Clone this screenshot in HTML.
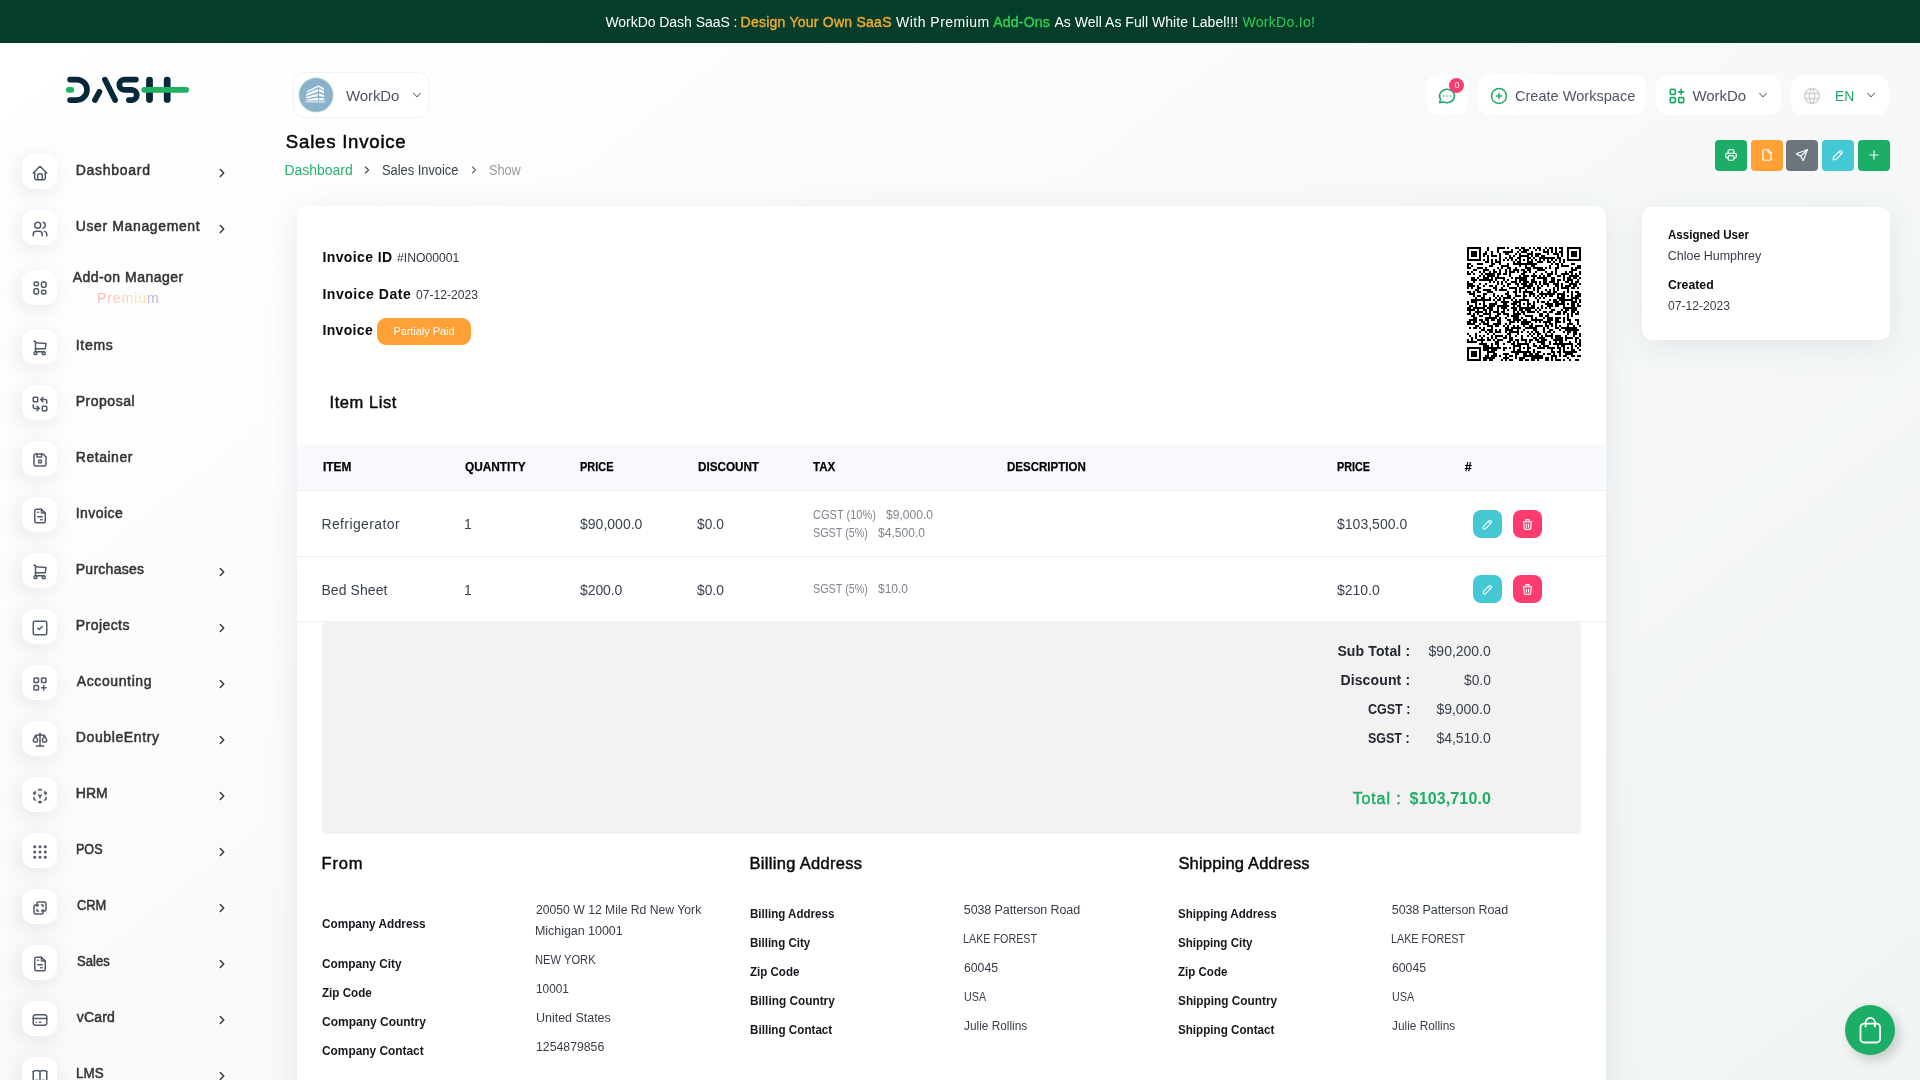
<!DOCTYPE html>
<html lang="en"><head><meta charset="utf-8"><title>Sales Invoice</title>
<style>
html,body{margin:0;padding:0;}
body{width:1920px;height:1080px;overflow:hidden;position:relative;font-family:'Liberation Sans', sans-serif;
background:linear-gradient(141.55deg,rgba(240,244,243,0) 3.46%,#f0f4f3 99.86%),#fff;}
#root{position:absolute;left:0;top:0;width:1920px;height:1080px;overflow:hidden;will-change:transform;}
.a{position:absolute;display:block;}
.t{position:absolute;white-space:pre;font-family:'Liberation Sans', sans-serif;}
</style></head><body><div id="root">
<div class="a" style="left:0px;top:0px;width:1920px;height:43px;background:#043e2a;"></div>
<svg class="a" style="left:60px;top:70px" width="140" height="40" viewBox="60 70 140 40" fill="none" stroke-linecap="round" stroke-linejoin="round">
<g stroke="#06293a" stroke-width="5.7">
<path d="M70.1 79.55H76.75A10.25 10.25 0 0 1 76.75 100.05H70.1"/>
<path d="M94.9 100.1L99.4 91.8"/>
<path d="M104.9 79.6L115.1 100.1"/>
<path d="M135.9 79.55H124.2A5.13 5.13 0 0 0 124.2 89.8H131.9A5.13 5.13 0 0 1 131.9 100.05H128.9"/>
</g>
<g stroke="#06293a" stroke-width="6.8"><path d="M149.5 80.1V99.4"/><path d="M167.2 80.1V99.4"/></g>
<g stroke="#22b063" stroke-width="5.8">
<path d="M68.7 89.85H71.3"/>
<path d="M144.2 89.85H186.2"/>
</g>
</svg>
<div class="a" style="left:22px;top:154.0px;width:35px;height:35px;background:#fff;border-radius:12px;box-shadow:-3px 4px 23px rgba(0,0,0,0.10);"></div>
<svg class="a" style="left:30.50px;top:163.50px" width="18" height="18" viewBox="0 0 24 24" fill="none" stroke="#525b69" stroke-width="2" stroke-linecap="round" stroke-linejoin="round"><path d="M5 12l-2 0l9 -9l9 9l-2 0"/><path d="M5 12v7a2 2 0 0 0 2 2h10a2 2 0 0 0 2 -2v-7"/><path d="M9 21v-6a2 2 0 0 1 2 -2h2a2 2 0 0 1 2 2v6"/></svg>
<svg class="a" style="left:214.80px;top:166.00px" width="14" height="14" viewBox="0 0 24 24" fill="none" stroke="#333" stroke-width="2.4" stroke-linecap="round" stroke-linejoin="round"><path d="M9 6l6 6l-6 6"/></svg>
<div class="a" style="left:22px;top:210.0px;width:35px;height:35px;background:#fff;border-radius:12px;box-shadow:-3px 4px 23px rgba(0,0,0,0.10);"></div>
<svg class="a" style="left:30.50px;top:219.50px" width="18" height="18" viewBox="0 0 24 24" fill="none" stroke="#525b69" stroke-width="2" stroke-linecap="round" stroke-linejoin="round"><path d="M9 7m-4 0a4 4 0 1 0 8 0a4 4 0 1 0 -8 0"/><path d="M3 21v-2a4 4 0 0 1 4 -4h4a4 4 0 0 1 4 4v2"/><path d="M16 3.13a4 4 0 0 1 0 7.75"/><path d="M21 21v-2a4 4 0 0 0 -3 -3.85"/></svg>
<svg class="a" style="left:214.80px;top:222.00px" width="14" height="14" viewBox="0 0 24 24" fill="none" stroke="#333" stroke-width="2.4" stroke-linecap="round" stroke-linejoin="round"><path d="M9 6l6 6l-6 6"/></svg>
<div class="a" style="left:22px;top:270.0px;width:35px;height:35px;background:#fff;border-radius:12px;box-shadow:-3px 4px 23px rgba(0,0,0,0.10);"></div>
<svg class="a" style="left:30.50px;top:278.80px" width="18" height="18" viewBox="0 0 24 24" fill="none" stroke="#525b69" stroke-width="2" stroke-linecap="round" stroke-linejoin="round"><rect x="4" y="4" width="6" height="5" rx="2"/><rect x="4" y="13" width="6" height="7" rx="2"/><rect x="14" y="4" width="6" height="7" rx="2"/><rect x="14" y="15" width="6" height="5" rx="2"/></svg>
<div class="a" style="left:22px;top:329.0px;width:35px;height:35px;background:#fff;border-radius:12px;box-shadow:-3px 4px 23px rgba(0,0,0,0.10);"></div>
<svg class="a" style="left:30.50px;top:338.50px" width="18" height="18" viewBox="0 0 24 24" fill="none" stroke="#525b69" stroke-width="2" stroke-linecap="round" stroke-linejoin="round"><circle cx="6" cy="19" r="2"/><circle cx="17" cy="19" r="2"/><path d="M17 17h-11v-14h-2"/><path d="M6 5l14 1l-1 7h-13"/></svg>
<div class="a" style="left:22px;top:385.0px;width:35px;height:35px;background:#fff;border-radius:12px;box-shadow:-3px 4px 23px rgba(0,0,0,0.10);"></div>
<svg class="a" style="left:30.50px;top:394.50px" width="18" height="18" viewBox="0 0 24 24" fill="none" stroke="#525b69" stroke-width="2" stroke-linecap="round" stroke-linejoin="round"><rect x="3" y="3" width="6" height="6" rx="1"/><rect x="15" y="15" width="6" height="6" rx="1"/><path d="M21 11v-3a2 2 0 0 0 -2 -2h-6l3 3m0 -6l-3 3"/><path d="M3 13v3a2 2 0 0 0 2 2h6l-3 -3m0 6l3 -3"/></svg>
<div class="a" style="left:22px;top:441.0px;width:35px;height:35px;background:#fff;border-radius:12px;box-shadow:-3px 4px 23px rgba(0,0,0,0.10);"></div>
<svg class="a" style="left:30.50px;top:450.50px" width="18" height="18" viewBox="0 0 24 24" fill="none" stroke="#525b69" stroke-width="2" stroke-linecap="round" stroke-linejoin="round"><path d="M6 4h10l4 4v10a2 2 0 0 1 -2 2h-12a2 2 0 0 1 -2 -2v-12a2 2 0 0 1 2 -2"/><circle cx="12" cy="14" r="2"/><path d="M14 4l0 4l-6 0l0 -4"/></svg>
<div class="a" style="left:22px;top:497.0px;width:35px;height:35px;background:#fff;border-radius:12px;box-shadow:-3px 4px 23px rgba(0,0,0,0.10);"></div>
<svg class="a" style="left:30.50px;top:506.50px" width="18" height="18" viewBox="0 0 24 24" fill="none" stroke="#525b69" stroke-width="2" stroke-linecap="round" stroke-linejoin="round"><path d="M14 3v4a1 1 0 0 0 1 1h4"/><path d="M17 21h-10a2 2 0 0 1 -2 -2v-14a2 2 0 0 1 2 -2h7l5 5v11a2 2 0 0 1 -2 2z"/><path d="M9 7l1 0"/><path d="M9 13l6 0"/><path d="M13 17l2 0"/></svg>
<div class="a" style="left:22px;top:553.0px;width:35px;height:35px;background:#fff;border-radius:12px;box-shadow:-3px 4px 23px rgba(0,0,0,0.10);"></div>
<svg class="a" style="left:30.50px;top:562.50px" width="18" height="18" viewBox="0 0 24 24" fill="none" stroke="#525b69" stroke-width="2" stroke-linecap="round" stroke-linejoin="round"><circle cx="6" cy="19" r="2"/><circle cx="17" cy="19" r="2"/><path d="M17 17h-11v-14h-2"/><path d="M6 5l14 1l-1 7h-13"/></svg>
<svg class="a" style="left:214.80px;top:565.00px" width="14" height="14" viewBox="0 0 24 24" fill="none" stroke="#333" stroke-width="2.4" stroke-linecap="round" stroke-linejoin="round"><path d="M9 6l6 6l-6 6"/></svg>
<div class="a" style="left:22px;top:609.0px;width:35px;height:35px;background:#fff;border-radius:12px;box-shadow:-3px 4px 23px rgba(0,0,0,0.10);"></div>
<svg class="a" style="left:30.50px;top:618.50px" width="18" height="18" viewBox="0 0 24 24" fill="none" stroke="#525b69" stroke-width="2" stroke-linecap="round" stroke-linejoin="round"><rect x="3" y="3" width="18" height="18" rx="2"/><path d="M9 12l2 2l4 -4"/></svg>
<svg class="a" style="left:214.80px;top:621.00px" width="14" height="14" viewBox="0 0 24 24" fill="none" stroke="#333" stroke-width="2.4" stroke-linecap="round" stroke-linejoin="round"><path d="M9 6l6 6l-6 6"/></svg>
<div class="a" style="left:22px;top:665.0px;width:35px;height:35px;background:#fff;border-radius:12px;box-shadow:-3px 4px 23px rgba(0,0,0,0.10);"></div>
<svg class="a" style="left:30.50px;top:674.50px" width="18" height="18" viewBox="0 0 24 24" fill="none" stroke="#525b69" stroke-width="2" stroke-linecap="round" stroke-linejoin="round"><rect x="4" y="4" width="6" height="6" rx="1"/><rect x="14" y="4" width="6" height="6" rx="1"/><rect x="4" y="14" width="6" height="6" rx="1"/><path d="M14 17h6m-3 -3v6"/></svg>
<svg class="a" style="left:214.80px;top:677.00px" width="14" height="14" viewBox="0 0 24 24" fill="none" stroke="#333" stroke-width="2.4" stroke-linecap="round" stroke-linejoin="round"><path d="M9 6l6 6l-6 6"/></svg>
<div class="a" style="left:22px;top:721.0px;width:35px;height:35px;background:#fff;border-radius:12px;box-shadow:-3px 4px 23px rgba(0,0,0,0.10);"></div>
<svg class="a" style="left:30.50px;top:730.50px" width="18" height="18" viewBox="0 0 24 24" fill="none" stroke="#525b69" stroke-width="2" stroke-linecap="round" stroke-linejoin="round"><path d="M7 20l10 0"/><path d="M6 6l6 -1l6 1"/><path d="M12 3l0 17"/><path d="M9 12l-3 -6l-3 6a3 3 0 0 0 6 0"/><path d="M21 12l-3 -6l-3 6a3 3 0 0 0 6 0"/></svg>
<svg class="a" style="left:214.80px;top:733.00px" width="14" height="14" viewBox="0 0 24 24" fill="none" stroke="#333" stroke-width="2.4" stroke-linecap="round" stroke-linejoin="round"><path d="M9 6l6 6l-6 6"/></svg>
<div class="a" style="left:22px;top:777.0px;width:35px;height:35px;background:#fff;border-radius:12px;box-shadow:-3px 4px 23px rgba(0,0,0,0.10);"></div>
<svg class="a" style="left:30.50px;top:786.50px" width="18" height="18" viewBox="0 0 24 24" fill="none" stroke="#525b69" stroke-width="2" stroke-linecap="round" stroke-linejoin="round"><path d="M6 17.6l-2 -1.1v-2.5"/><path d="M4 10v-2.5l2 -1.1"/><path d="M10 4.1l2 -1.1l2 1.1"/><path d="M18 6.4l2 1.1v2.5"/><path d="M20 14v2.5l-2 1.12"/><path d="M14 19.9l-2 1.1l-2 -1.1"/><path d="M12 12l2 -1.1"/><path d="M18 8.6l2 -1.1"/><path d="M12 12l0 2.5"/><path d="M12 18.5l0 2.5"/><path d="M12 12l-2 -1.12"/><path d="M6 8.6l-2 -1.1"/></svg>
<svg class="a" style="left:214.80px;top:789.00px" width="14" height="14" viewBox="0 0 24 24" fill="none" stroke="#333" stroke-width="2.4" stroke-linecap="round" stroke-linejoin="round"><path d="M9 6l6 6l-6 6"/></svg>
<div class="a" style="left:22px;top:833.0px;width:35px;height:35px;background:#fff;border-radius:12px;box-shadow:-3px 4px 23px rgba(0,0,0,0.10);"></div>
<svg class="a" style="left:30.50px;top:842.50px" width="18" height="18" viewBox="0 0 24 24" fill="none" stroke="#525b69" stroke-width="2" stroke-linecap="round" stroke-linejoin="round"><circle cx="5" cy="5" r="1"/><circle cx="12" cy="5" r="1"/><circle cx="19" cy="5" r="1"/><circle cx="5" cy="12" r="1"/><circle cx="12" cy="12" r="1"/><circle cx="19" cy="12" r="1"/><circle cx="5" cy="19" r="1"/><circle cx="12" cy="19" r="1"/><circle cx="19" cy="19" r="1"/></svg>
<svg class="a" style="left:214.80px;top:845.00px" width="14" height="14" viewBox="0 0 24 24" fill="none" stroke="#333" stroke-width="2.4" stroke-linecap="round" stroke-linejoin="round"><path d="M9 6l6 6l-6 6"/></svg>
<div class="a" style="left:22px;top:889.0px;width:35px;height:35px;background:#fff;border-radius:12px;box-shadow:-3px 4px 23px rgba(0,0,0,0.10);"></div>
<svg class="a" style="left:30.50px;top:898.50px" width="18" height="18" viewBox="0 0 24 24" fill="none" stroke="#525b69" stroke-width="2" stroke-linecap="round" stroke-linejoin="round"><path d="M16 16v2a2 2 0 0 1 -2 2h-8a2 2 0 0 1 -2 -2v-8a2 2 0 0 1 2 -2h2v-2a2 2 0 0 1 2 -2h8a2 2 0 0 1 2 2v8a2 2 0 0 1 -2 2h-2"/><path d="M10 8l-2 0l0 2"/><path d="M8 14l0 2l2 0"/><path d="M14 8l2 0l0 2"/><path d="M16 14l0 2l-2 0"/></svg>
<svg class="a" style="left:214.80px;top:901.00px" width="14" height="14" viewBox="0 0 24 24" fill="none" stroke="#333" stroke-width="2.4" stroke-linecap="round" stroke-linejoin="round"><path d="M9 6l6 6l-6 6"/></svg>
<div class="a" style="left:22px;top:945.0px;width:35px;height:35px;background:#fff;border-radius:12px;box-shadow:-3px 4px 23px rgba(0,0,0,0.10);"></div>
<svg class="a" style="left:30.50px;top:954.50px" width="18" height="18" viewBox="0 0 24 24" fill="none" stroke="#525b69" stroke-width="2" stroke-linecap="round" stroke-linejoin="round"><path d="M14 3v4a1 1 0 0 0 1 1h4"/><path d="M17 21h-10a2 2 0 0 1 -2 -2v-14a2 2 0 0 1 2 -2h7l5 5v11a2 2 0 0 1 -2 2z"/><path d="M9 7l1 0"/><path d="M9 13l6 0"/><path d="M13 17l2 0"/></svg>
<svg class="a" style="left:214.80px;top:957.00px" width="14" height="14" viewBox="0 0 24 24" fill="none" stroke="#333" stroke-width="2.4" stroke-linecap="round" stroke-linejoin="round"><path d="M9 6l6 6l-6 6"/></svg>
<div class="a" style="left:22px;top:1001.0px;width:35px;height:35px;background:#fff;border-radius:12px;box-shadow:-3px 4px 23px rgba(0,0,0,0.10);"></div>
<svg class="a" style="left:30.50px;top:1010.50px" width="18" height="18" viewBox="0 0 24 24" fill="none" stroke="#525b69" stroke-width="2" stroke-linecap="round" stroke-linejoin="round"><rect x="3" y="5" width="18" height="14" rx="3"/><path d="M3 10l18 0"/><path d="M7 15l.01 0"/><path d="M11 15l2 0"/></svg>
<svg class="a" style="left:214.80px;top:1013.00px" width="14" height="14" viewBox="0 0 24 24" fill="none" stroke="#333" stroke-width="2.4" stroke-linecap="round" stroke-linejoin="round"><path d="M9 6l6 6l-6 6"/></svg>
<div class="a" style="left:22px;top:1057.0px;width:35px;height:35px;background:#fff;border-radius:12px;box-shadow:-3px 4px 23px rgba(0,0,0,0.10);"></div>
<svg class="a" style="left:30.50px;top:1066.50px" width="18" height="18" viewBox="0 0 24 24" fill="none" stroke="#525b69" stroke-width="2" stroke-linecap="round" stroke-linejoin="round"><path d="M3 19a9 9 0 0 1 9 0a9 9 0 0 1 9 0"/><path d="M3 6a9 9 0 0 1 9 0a9 9 0 0 1 9 0"/><path d="M3 6l0 13"/><path d="M12 6l0 13"/><path d="M21 6l0 13"/></svg>
<svg class="a" style="left:214.80px;top:1069.00px" width="14" height="14" viewBox="0 0 24 24" fill="none" stroke="#333" stroke-width="2.4" stroke-linecap="round" stroke-linejoin="round"><path d="M9 6l6 6l-6 6"/></svg>
<div class="a" style="left:293px;top:72.2px;width:135.5px;height:45.5px;background:rgba(255,255,255,.7);border:1px solid #f0f1f1;border-radius:11px;box-sizing:border-box;"></div>
<svg class="a" style="left:292px;top:72px" width="48" height="46" viewBox="0 0 48 46">
<circle cx="24.05" cy="23" r="17.7" fill="#c9ecd9"/><circle cx="24.05" cy="23" r="16.8" fill="#8cb1cb"/>
<g fill="#fff">
<path d="M14.7 19.2L26.4 13.2L26.4 15L15.2 20.3Z"/><path d="M26.4 13.2L32 16.3L32 18L26.4 15Z"/>
<path d="M14.1 22.1L26 16.8L26 19.8L14.1 23.9Z"/><path d="M14.1 25.1L25.7 21.8L25.7 24.3L14.1 26.5Z"/><path d="M14.9 27.5L26 25.8L26 28.2L14.3 28.4Z"/>
<path d="M27.1 16.8L32 19.3L32 21.2L27.1 19.7Z"/><path d="M27.1 21.6L32 22.9L32 24.9L27.1 23.9Z"/><path d="M27.1 25.9L32 26.3L32 28.2L27.1 28.2Z"/>
<rect x="13" y="28.5" width="20.2" height="2.4" opacity=".4"/></g>
</svg>
<svg class="a" style="left:409.50px;top:88.30px" width="14" height="14" viewBox="0 0 24 24" fill="none" stroke="#5f6368" stroke-width="1.8" stroke-linecap="round" stroke-linejoin="round"><path d="M6 9l6 6l6 -6"/></svg>
<div class="a" style="left:1426px;top:75px;width:42px;height:40px;background:#fff;border-radius:12px;"></div>
<div class="a" style="left:1478px;top:75px;width:168px;height:40px;background:#fff;border-radius:12px;"></div>
<div class="a" style="left:1656px;top:75px;width:125px;height:40px;background:#fff;border-radius:12px;"></div>
<div class="a" style="left:1791px;top:75px;width:98px;height:40px;background:#fff;border-radius:12px;"></div>
<svg class="a" style="left:1437.20px;top:86.00px" width="20" height="20" viewBox="0 0 24 24" fill="none" stroke="#1fa968" stroke-width="1.8" stroke-linecap="round" stroke-linejoin="round"><path d="M3 20l1.3 -3.9a9 8 0 1 1 3.4 2.9l-4.7 1"/><path d="M12 12l0 .01"/><path d="M8 12l0 .01"/><path d="M16 12l0 .01"/></svg>
<div class="a" style="left:1449.2px;top:77.5px;width:15px;height:15px;background:#fc3c6e;border-radius:50%;"></div>
<svg class="a" style="left:1489.30px;top:86.00px" width="20" height="20" viewBox="0 0 24 24" fill="none" stroke="#1fa968" stroke-width="1.8" stroke-linecap="round" stroke-linejoin="round"><circle cx="12" cy="12" r="9"/><path d="M9 12l6 0"/><path d="M12 9l0 6"/></svg>
<svg class="a" style="left:1667.30px;top:86.00px" width="20" height="20" viewBox="0 0 24 24" fill="none" stroke="#1fa968" stroke-width="2" stroke-linecap="round" stroke-linejoin="round"><rect x="4" y="4" width="6" height="6" rx="1"/><rect x="4" y="14" width="6" height="6" rx="1"/><rect x="14" y="14" width="6" height="6" rx="1"/><path d="M14 7h6m-3 -3v6"/></svg>
<svg class="a" style="left:1756.00px;top:88.30px" width="14" height="14" viewBox="0 0 24 24" fill="none" stroke="#5f6368" stroke-width="1.8" stroke-linecap="round" stroke-linejoin="round"><path d="M6 9l6 6l6 -6"/></svg>
<svg class="a" style="left:1802.30px;top:86.00px" width="20" height="20" viewBox="0 0 24 24" fill="none" stroke="#cfcfd4" stroke-width="1.6" stroke-linecap="round" stroke-linejoin="round"><circle cx="12" cy="12" r="9"/><path d="M3.6 9l16.8 0"/><path d="M3.6 15l16.8 0"/><path d="M11.5 3a17 17 0 0 0 0 18"/><path d="M12.5 3a17 17 0 0 1 0 18"/></svg>
<svg class="a" style="left:1863.80px;top:88.30px" width="14" height="14" viewBox="0 0 24 24" fill="none" stroke="#5f6368" stroke-width="1.8" stroke-linecap="round" stroke-linejoin="round"><path d="M6 9l6 6l6 -6"/></svg>
<svg class="a" style="left:360.70px;top:164.20px" width="12" height="12" viewBox="0 0 24 24" fill="none" stroke="#444" stroke-width="2.2" stroke-linecap="round" stroke-linejoin="round"><path d="M9 6l6 6l-6 6"/></svg>
<svg class="a" style="left:468.20px;top:164.20px" width="12" height="12" viewBox="0 0 24 24" fill="none" stroke="#666" stroke-width="2.2" stroke-linecap="round" stroke-linejoin="round"><path d="M9 6l6 6l-6 6"/></svg>
<div class="a" style="left:1715px;top:140px;width:32px;height:31px;background:#1CAE66;border-radius:4px;"></div>
<svg class="a" style="left:1724.00px;top:148.10px" width="14" height="14" viewBox="0 0 24 24" fill="none" stroke="#fff" stroke-width="2" stroke-linecap="round" stroke-linejoin="round"><path d="M17 17h2a2 2 0 0 0 2 -2v-4a2 2 0 0 0 -2 -2h-14a2 2 0 0 0 -2 2v4a2 2 0 0 0 2 2h2"/><path d="M17 9v-4a2 2 0 0 0 -2 -2h-6a2 2 0 0 0 -2 2v4"/><rect x="7" y="13" width="10" height="8" rx="2"/></svg>
<div class="a" style="left:1751px;top:140px;width:32px;height:31px;background:#ffa136;border-radius:4px;"></div>
<svg class="a" style="left:1760.00px;top:148.10px" width="14" height="14" viewBox="0 0 24 24" fill="none" stroke="#fff" stroke-width="2" stroke-linecap="round" stroke-linejoin="round"><path d="M14 3v4a1 1 0 0 0 1 1h4"/><path d="M17 21h-10a2 2 0 0 1 -2 -2v-14a2 2 0 0 1 2 -2h7l5 5v11a2 2 0 0 1 -2 2z"/></svg>
<div class="a" style="left:1786px;top:140px;width:32px;height:31px;background:#6c757d;border-radius:4px;"></div>
<svg class="a" style="left:1795.00px;top:148.10px" width="14" height="14" viewBox="0 0 24 24" fill="none" stroke="#fff" stroke-width="2" stroke-linecap="round" stroke-linejoin="round"><path d="M10 14l11 -11"/><path d="M21 3l-6.5 18a.55 .55 0 0 1 -1 0l-3.500 -7l-7 -3.500a.55 .55 0 0 1 0 -1l18 -6.500"/></svg>
<div class="a" style="left:1822px;top:140px;width:32px;height:31px;background:#44c8d4;border-radius:4px;"></div>
<svg class="a" style="left:1831.00px;top:148.10px" width="14" height="14" viewBox="0 0 24 24" fill="none" stroke="#fff" stroke-width="2" stroke-linecap="round" stroke-linejoin="round"><path d="M4 20h4l10.5 -10.500a2.828 2.828 0 1 0 -4 -4l-10.500 10.500v4"/><path d="M13.500 6.500l4 4"/></svg>
<div class="a" style="left:1858px;top:140px;width:32px;height:31px;background:#1CAE66;border-radius:4px;"></div>
<svg class="a" style="left:1867.00px;top:148.10px" width="14" height="14" viewBox="0 0 24 24" fill="none" stroke="#fff" stroke-width="2" stroke-linecap="round" stroke-linejoin="round"><path d="M12 5l0 14"/><path d="M5 12l14 0"/></svg>
<div class="a" style="left:297px;top:206px;width:1309px;height:900px;background:#fff;border-radius:10px;box-shadow:0 6px 30px rgba(182,186,203,.3);"></div>
<div class="a" style="left:377px;top:318px;width:94px;height:27px;background:#ffa136;border-radius:9px;"></div>
<div class="a" style="left:297px;top:444px;width:1309px;height:46px;background:#f8f9fd;border-bottom:1px solid #f1f1f1;"></div>
<div class="a" style="left:297px;top:556px;width:1309px;height:1px;background:#f1f1f1;"></div>
<div class="a" style="left:297px;top:621px;width:1309px;height:1px;background:#f1f1f1;"></div>
<div class="a" style="left:1473px;top:510px;width:29px;height:28px;background:#44c8d4;border-radius:8px;"></div>
<svg class="a" style="left:1481.00px;top:517.50px" width="13" height="13" viewBox="0 0 24 24" fill="none" stroke="#fff" stroke-width="2" stroke-linecap="round" stroke-linejoin="round"><path d="M4 20h4l10.5 -10.500a2.828 2.828 0 1 0 -4 -4l-10.500 10.500v4"/><path d="M13.500 6.500l4 4"/></svg>
<div class="a" style="left:1513px;top:510px;width:29px;height:28px;background:#fc3c6e;border-radius:8px;"></div>
<svg class="a" style="left:1521.00px;top:517.50px" width="13" height="13" viewBox="0 0 24 24" fill="none" stroke="#fff" stroke-width="2" stroke-linecap="round" stroke-linejoin="round"><path d="M4 7l16 0"/><path d="M10 11l0 6"/><path d="M14 11l0 6"/><path d="M5 7l1 12a2 2 0 0 0 2 2h8a2 2 0 0 0 2 -2l1 -12"/><path d="M9 7v-3a1 1 0 0 1 1 -1h4a1 1 0 0 1 1 1v3"/></svg>
<div class="a" style="left:1473px;top:575px;width:29px;height:28px;background:#44c8d4;border-radius:8px;"></div>
<svg class="a" style="left:1481.00px;top:582.50px" width="13" height="13" viewBox="0 0 24 24" fill="none" stroke="#fff" stroke-width="2" stroke-linecap="round" stroke-linejoin="round"><path d="M4 20h4l10.5 -10.500a2.828 2.828 0 1 0 -4 -4l-10.500 10.500v4"/><path d="M13.500 6.500l4 4"/></svg>
<div class="a" style="left:1513px;top:575px;width:29px;height:28px;background:#fc3c6e;border-radius:8px;"></div>
<svg class="a" style="left:1521.00px;top:582.50px" width="13" height="13" viewBox="0 0 24 24" fill="none" stroke="#fff" stroke-width="2" stroke-linecap="round" stroke-linejoin="round"><path d="M4 7l16 0"/><path d="M10 11l0 6"/><path d="M14 11l0 6"/><path d="M5 7l1 12a2 2 0 0 0 2 2h8a2 2 0 0 0 2 -2l1 -12"/><path d="M9 7v-3a1 1 0 0 1 1 -1h4a1 1 0 0 1 1 1v3"/></svg>
<div class="a" style="left:322px;top:622px;width:1259px;height:211.5px;background:#f2f2f2;border-radius:5px;"></div>
<div class="a" style="left:1337px;top:772px;width:154px;height:1px;background:#efefef;"></div>
<div class="a" style="left:1642px;top:207px;width:248px;height:133px;background:#fff;border-radius:10px;box-shadow:0 6px 30px rgba(182,186,203,.3);"></div>
<div class="a" style="left:1845px;top:1005px;width:50px;height:50px;background:#1cae66;border-radius:50%;box-shadow:4px 5px 12px rgba(0,0,0,.18);"></div>
<svg class="a" style="left:1845px;top:1005px" width="50" height="50" viewBox="1845 1005 50 50" fill="none" stroke="#fff" stroke-width="1.8" stroke-linecap="round" stroke-linejoin="round"><rect x="1860.5" y="1023.7" width="19.6" height="18.8" rx="3.6"/><path d="M1865.6 1026.6V1022.6a4.65 4.65 0 0 1 9.3 0V1026.6"/></svg>
<svg class="a" style="left:1467px;top:247px" width="114" height="114" viewBox="0 0 114 114" shape-rendering="crispEdges"><rect width="114" height="114" fill="#fff"/><path fill="#000" d="M0 0h14v2h-14zM20 0h2v2h-2zM30 0h8v2h-8zM40 0h2v2h-2zM48 0h4v2h-4zM54 0h4v2h-4zM62 0h2v2h-2zM66 0h2v2h-2zM70 0h4v2h-4zM78 0h2v2h-2zM82 0h4v2h-4zM88 0h2v2h-2zM92 0h4v2h-4zM100 0h14v2h-14zM0 2h2v2h-2zM12 2h2v2h-2zM20 2h2v2h-2zM30 2h2v2h-2zM44 2h2v2h-2zM52 2h2v2h-2zM56 2h6v2h-6zM68 2h2v2h-2zM72 2h2v2h-2zM76 2h2v2h-2zM80 2h2v2h-2zM84 2h2v2h-2zM88 2h2v2h-2zM94 2h2v2h-2zM100 2h2v2h-2zM112 2h2v2h-2zM0 4h2v2h-2zM4 4h6v2h-6zM12 4h2v2h-2zM18 4h2v2h-2zM24 4h2v2h-2zM30 4h2v2h-2zM36 4h10v2h-10zM50 4h2v2h-2zM54 4h6v2h-6zM64 4h2v2h-2zM76 4h6v2h-6zM84 4h2v2h-2zM88 4h2v2h-2zM92 4h4v2h-4zM100 4h2v2h-2zM104 4h6v2h-6zM112 4h2v2h-2zM0 6h2v2h-2zM4 6h6v2h-6zM12 6h2v2h-2zM16 6h4v2h-4zM24 6h2v2h-2zM32 6h2v2h-2zM38 6h4v2h-4zM48 6h2v2h-2zM52 6h2v2h-2zM60 6h6v2h-6zM68 6h6v2h-6zM80 6h2v2h-2zM86 6h6v2h-6zM94 6h2v2h-2zM100 6h2v2h-2zM104 6h6v2h-6zM112 6h2v2h-2zM0 8h2v2h-2zM4 8h6v2h-6zM12 8h2v2h-2zM16 8h2v2h-2zM20 8h2v2h-2zM24 8h6v2h-6zM32 8h2v2h-2zM42 8h2v2h-2zM46 8h2v2h-2zM52 8h10v2h-10zM64 8h2v2h-2zM68 8h4v2h-4zM74 8h4v2h-4zM90 8h2v2h-2zM94 8h2v2h-2zM100 8h2v2h-2zM104 8h6v2h-6zM112 8h2v2h-2zM0 10h2v2h-2zM12 10h2v2h-2zM20 10h2v2h-2zM32 10h2v2h-2zM38 10h2v2h-2zM42 10h4v2h-4zM50 10h4v2h-4zM60 10h4v2h-4zM66 10h2v2h-2zM72 10h16v2h-16zM90 10h4v2h-4zM100 10h2v2h-2zM112 10h2v2h-2zM0 12h14v2h-14zM16 12h2v2h-2zM20 12h2v2h-2zM24 12h2v2h-2zM28 12h2v2h-2zM32 12h2v2h-2zM36 12h2v2h-2zM40 12h2v2h-2zM44 12h2v2h-2zM48 12h2v2h-2zM52 12h2v2h-2zM56 12h2v2h-2zM60 12h2v2h-2zM64 12h2v2h-2zM68 12h2v2h-2zM72 12h2v2h-2zM76 12h2v2h-2zM80 12h2v2h-2zM84 12h2v2h-2zM88 12h2v2h-2zM92 12h2v2h-2zM96 12h2v2h-2zM100 12h14v2h-14zM18 14h4v2h-4zM24 14h2v2h-2zM28 14h6v2h-6zM46 14h2v2h-2zM50 14h4v2h-4zM60 14h6v2h-6zM70 14h6v2h-6zM80 14h4v2h-4zM86 14h2v2h-2zM92 14h2v2h-2zM96 14h2v2h-2zM0 16h4v2h-4zM10 16h6v2h-6zM24 16h4v2h-4zM32 16h2v2h-2zM40 16h2v2h-2zM46 16h24v2h-24zM84 16h2v2h-2zM88 16h4v2h-4zM94 16h2v2h-2zM104 16h4v2h-4zM0 18h2v2h-2zM4 18h2v2h-2zM22 18h4v2h-4zM34 18h8v2h-8zM52 18h2v2h-2zM58 18h2v2h-2zM64 18h4v2h-4zM82 18h2v2h-2zM90 18h2v2h-2zM94 18h8v2h-8zM110 18h4v2h-4zM0 20h4v2h-4zM10 20h6v2h-6zM18 20h2v2h-2zM30 20h2v2h-2zM34 20h2v2h-2zM40 20h4v2h-4zM48 20h2v2h-2zM58 20h6v2h-6zM66 20h10v2h-10zM78 20h2v2h-2zM82 20h2v2h-2zM88 20h4v2h-4zM104 20h2v2h-2zM108 20h6v2h-6zM6 22h4v2h-4zM16 22h6v2h-6zM26 22h2v2h-2zM32 22h2v2h-2zM38 22h2v2h-2zM42 22h2v2h-2zM46 22h6v2h-6zM54 22h4v2h-4zM60 22h4v2h-4zM70 22h8v2h-8zM88 22h2v2h-2zM104 22h6v2h-6zM0 24h2v2h-2zM4 24h2v2h-2zM12 24h2v2h-2zM16 24h2v2h-2zM22 24h2v2h-2zM26 24h4v2h-4zM32 24h2v2h-2zM38 24h2v2h-2zM42 24h6v2h-6zM50 24h2v2h-2zM56 24h4v2h-4zM62 24h2v2h-2zM68 24h2v2h-2zM78 24h2v2h-2zM84 24h2v2h-2zM88 24h2v2h-2zM98 24h2v2h-2zM102 24h4v2h-4zM112 24h2v2h-2zM0 26h4v2h-4zM6 26h2v2h-2zM14 26h2v2h-2zM18 26h10v2h-10zM30 26h4v2h-4zM36 26h4v2h-4zM42 26h2v2h-2zM54 26h4v2h-4zM66 26h2v2h-2zM74 26h2v2h-2zM80 26h6v2h-6zM88 26h2v2h-2zM94 26h8v2h-8zM104 26h2v2h-2zM108 26h2v2h-2zM112 26h2v2h-2zM12 28h2v2h-2zM16 28h2v2h-2zM20 28h8v2h-8zM30 28h2v2h-2zM42 28h2v2h-2zM52 28h2v2h-2zM56 28h6v2h-6zM64 28h6v2h-6zM72 28h2v2h-2zM76 28h2v2h-2zM80 28h4v2h-4zM90 28h4v2h-4zM96 28h2v2h-2zM102 28h10v2h-10zM4 30h4v2h-4zM10 30h2v2h-2zM16 30h6v2h-6zM24 30h2v2h-2zM28 30h10v2h-10zM44 30h2v2h-2zM48 30h12v2h-12zM66 30h2v2h-2zM70 30h10v2h-10zM84 30h4v2h-4zM96 30h2v2h-2zM100 30h4v2h-4zM106 30h4v2h-4zM112 30h2v2h-2zM4 32h6v2h-6zM12 32h14v2h-14zM28 32h2v2h-2zM36 32h2v2h-2zM40 32h2v2h-2zM48 32h2v2h-2zM52 32h8v2h-8zM64 32h4v2h-4zM76 32h4v2h-4zM84 32h4v2h-4zM90 32h4v2h-4zM96 32h2v2h-2zM100 32h6v2h-6zM110 32h2v2h-2zM0 34h2v2h-2zM6 34h2v2h-2zM22 34h2v2h-2zM26 34h2v2h-2zM30 34h2v2h-2zM34 34h2v2h-2zM38 34h2v2h-2zM44 34h6v2h-6zM52 34h2v2h-2zM56 34h6v2h-6zM64 34h6v2h-6zM72 34h2v2h-2zM76 34h4v2h-4zM82 34h6v2h-6zM90 34h2v2h-2zM98 34h4v2h-4zM104 34h2v2h-2zM108 34h4v2h-4zM0 36h6v2h-6zM12 36h2v2h-2zM18 36h2v2h-2zM30 36h2v2h-2zM34 36h2v2h-2zM40 36h4v2h-4zM48 36h4v2h-4zM54 36h6v2h-6zM62 36h4v2h-4zM68 36h2v2h-2zM72 36h2v2h-2zM76 36h6v2h-6zM86 36h6v2h-6zM94 36h2v2h-2zM102 36h8v2h-8zM112 36h2v2h-2zM0 38h8v2h-8zM10 38h2v2h-2zM16 38h2v2h-2zM22 38h4v2h-4zM28 38h2v2h-2zM36 38h2v2h-2zM40 38h2v2h-2zM50 38h2v2h-2zM56 38h10v2h-10zM70 38h2v2h-2zM74 38h2v2h-2zM80 38h2v2h-2zM88 38h4v2h-4zM94 38h2v2h-2zM98 38h6v2h-6zM106 38h4v2h-4zM0 40h2v2h-2zM4 40h2v2h-2zM10 40h4v2h-4zM26 40h4v2h-4zM34 40h2v2h-2zM42 40h8v2h-8zM52 40h6v2h-6zM60 40h4v2h-4zM66 40h2v2h-2zM70 40h4v2h-4zM86 40h2v2h-2zM90 40h2v2h-2zM94 40h8v2h-8zM104 40h4v2h-4zM110 40h2v2h-2zM8 42h4v2h-4zM16 42h8v2h-8zM28 42h2v2h-2zM32 42h8v2h-8zM48 42h2v2h-2zM52 42h2v2h-2zM58 42h2v2h-2zM66 42h2v2h-2zM70 42h2v2h-2zM78 42h2v2h-2zM82 42h2v2h-2zM86 42h2v2h-2zM90 42h2v2h-2zM100 42h2v2h-2zM0 44h4v2h-4zM6 44h2v2h-2zM10 44h4v2h-4zM20 44h6v2h-6zM40 44h2v2h-2zM46 44h4v2h-4zM52 44h2v2h-2zM56 44h10v2h-10zM70 44h2v2h-2zM74 44h2v2h-2zM80 44h4v2h-4zM86 44h4v2h-4zM96 44h2v2h-2zM100 44h2v2h-2zM104 44h2v2h-2zM108 44h4v2h-4zM2 46h6v2h-6zM16 46h4v2h-4zM26 46h2v2h-2zM38 46h4v2h-4zM48 46h2v2h-2zM56 46h2v2h-2zM62 46h6v2h-6zM72 46h16v2h-16zM90 46h8v2h-8zM104 46h2v2h-2zM110 46h4v2h-4zM6 48h2v2h-2zM10 48h4v2h-4zM16 48h2v2h-2zM26 48h2v2h-2zM30 48h2v2h-2zM34 48h2v2h-2zM40 48h4v2h-4zM48 48h6v2h-6zM56 48h4v2h-4zM62 48h2v2h-2zM66 48h2v2h-2zM70 48h2v2h-2zM74 48h2v2h-2zM78 48h2v2h-2zM82 48h4v2h-4zM90 48h2v2h-2zM94 48h4v2h-4zM100 48h2v2h-2zM104 48h2v2h-2zM108 48h6v2h-6zM8 50h2v2h-2zM14 50h4v2h-4zM22 50h2v2h-2zM28 50h2v2h-2zM32 50h2v2h-2zM36 50h8v2h-8zM46 50h2v2h-2zM56 50h2v2h-2zM68 50h2v2h-2zM72 50h2v2h-2zM76 50h2v2h-2zM90 50h8v2h-8zM104 50h8v2h-8zM4 52h20v2h-20zM26 52h2v2h-2zM30 52h4v2h-4zM36 52h2v2h-2zM44 52h2v2h-2zM48 52h2v2h-2zM52 52h10v2h-10zM70 52h2v2h-2zM82 52h2v2h-2zM86 52h4v2h-4zM92 52h14v2h-14zM108 52h2v2h-2zM112 52h2v2h-2zM0 54h2v2h-2zM4 54h6v2h-6zM16 54h2v2h-2zM28 54h2v2h-2zM34 54h8v2h-8zM46 54h8v2h-8zM60 54h2v2h-2zM66 54h2v2h-2zM70 54h2v2h-2zM74 54h4v2h-4zM80 54h2v2h-2zM86 54h6v2h-6zM94 54h4v2h-4zM104 54h6v2h-6zM112 54h2v2h-2zM0 56h2v2h-2zM8 56h2v2h-2zM12 56h2v2h-2zM16 56h2v2h-2zM22 56h8v2h-8zM36 56h4v2h-4zM44 56h6v2h-6zM52 56h2v2h-2zM56 56h2v2h-2zM60 56h4v2h-4zM66 56h2v2h-2zM78 56h8v2h-8zM88 56h10v2h-10zM100 56h2v2h-2zM104 56h4v2h-4zM110 56h2v2h-2zM2 58h4v2h-4zM8 58h2v2h-2zM16 58h4v2h-4zM22 58h6v2h-6zM30 58h12v2h-12zM46 58h2v2h-2zM50 58h4v2h-4zM60 58h2v2h-2zM64 58h4v2h-4zM74 58h2v2h-2zM80 58h6v2h-6zM88 58h4v2h-4zM96 58h2v2h-2zM104 58h4v2h-4zM110 58h4v2h-4zM0 60h4v2h-4zM6 60h12v2h-12zM20 60h6v2h-6zM30 60h2v2h-2zM34 60h6v2h-6zM44 60h6v2h-6zM52 60h16v2h-16zM70 60h2v2h-2zM74 60h2v2h-2zM78 60h2v2h-2zM82 60h2v2h-2zM96 60h14v2h-14zM0 62h8v2h-8zM10 62h2v2h-2zM16 62h4v2h-4zM22 62h4v2h-4zM30 62h2v2h-2zM36 62h2v2h-2zM40 62h2v2h-2zM46 62h4v2h-4zM52 62h4v2h-4zM58 62h6v2h-6zM68 62h2v2h-2zM72 62h2v2h-2zM84 62h4v2h-4zM94 62h2v2h-2zM98 62h4v2h-4zM104 62h6v2h-6zM2 64h2v2h-2zM8 64h8v2h-8zM18 64h2v2h-2zM22 64h2v2h-2zM26 64h6v2h-6zM34 64h4v2h-4zM46 64h2v2h-2zM50 64h2v2h-2zM54 64h4v2h-4zM60 64h8v2h-8zM70 64h2v2h-2zM76 64h4v2h-4zM82 64h4v2h-4zM90 64h4v2h-4zM96 64h4v2h-4zM104 64h4v2h-4zM110 64h2v2h-2zM0 66h4v2h-4zM6 66h2v2h-2zM10 66h2v2h-2zM16 66h8v2h-8zM30 66h4v2h-4zM36 66h6v2h-6zM46 66h8v2h-8zM56 66h2v2h-2zM72 66h4v2h-4zM80 66h2v2h-2zM88 66h6v2h-6zM96 66h2v2h-2zM100 66h2v2h-2zM104 66h2v2h-2zM108 66h4v2h-4zM4 68h4v2h-4zM12 68h4v2h-4zM22 68h2v2h-2zM28 68h4v2h-4zM40 68h2v2h-2zM44 68h8v2h-8zM58 68h8v2h-8zM72 68h4v2h-4zM78 68h4v2h-4zM100 68h2v2h-2zM104 68h2v2h-2zM6 70h4v2h-4zM18 70h12v2h-12zM32 70h2v2h-2zM38 70h2v2h-2zM46 70h6v2h-6zM54 70h2v2h-2zM64 70h2v2h-2zM68 70h2v2h-2zM76 70h2v2h-2zM80 70h6v2h-6zM88 70h6v2h-6zM96 70h2v2h-2zM100 70h2v2h-2zM2 72h8v2h-8zM12 72h4v2h-4zM18 72h4v2h-4zM24 72h4v2h-4zM30 72h4v2h-4zM40 72h4v2h-4zM46 72h8v2h-8zM56 72h4v2h-4zM64 72h12v2h-12zM80 72h6v2h-6zM88 72h4v2h-4zM96 72h2v2h-2zM100 72h4v2h-4zM108 72h4v2h-4zM0 74h4v2h-4zM6 74h4v2h-4zM14 74h4v2h-4zM20 74h2v2h-2zM30 74h4v2h-4zM42 74h6v2h-6zM50 74h2v2h-2zM54 74h10v2h-10zM68 74h2v2h-2zM72 74h2v2h-2zM76 74h8v2h-8zM88 74h6v2h-6zM96 74h2v2h-2zM102 74h2v2h-2zM110 74h2v2h-2zM0 76h8v2h-8zM12 76h2v2h-2zM16 76h6v2h-6zM26 76h8v2h-8zM38 76h2v2h-2zM42 76h2v2h-2zM54 76h8v2h-8zM64 76h2v2h-2zM78 76h2v2h-2zM82 76h4v2h-4zM88 76h2v2h-2zM100 76h6v2h-6zM110 76h2v2h-2zM8 78h4v2h-4zM20 78h6v2h-6zM28 78h4v2h-4zM36 78h2v2h-2zM40 78h2v2h-2zM46 78h2v2h-2zM50 78h2v2h-2zM56 78h2v2h-2zM62 78h4v2h-4zM68 78h8v2h-8zM78 78h4v2h-4zM84 78h2v2h-2zM88 78h2v2h-2zM92 78h2v2h-2zM100 78h2v2h-2zM106 78h2v2h-2zM112 78h2v2h-2zM2 80h2v2h-2zM6 80h4v2h-4zM12 80h2v2h-2zM16 80h2v2h-2zM24 80h2v2h-2zM38 80h4v2h-4zM44 80h10v2h-10zM58 80h12v2h-12zM76 80h2v2h-2zM80 80h2v2h-2zM88 80h4v2h-4zM94 80h16v2h-16zM14 82h4v2h-4zM20 82h6v2h-6zM28 82h2v2h-2zM32 82h2v2h-2zM38 82h8v2h-8zM50 82h2v2h-2zM56 82h2v2h-2zM66 82h4v2h-4zM76 82h2v2h-2zM82 82h4v2h-4zM92 82h2v2h-2zM98 82h14v2h-14zM12 84h2v2h-2zM18 84h2v2h-2zM22 84h4v2h-4zM28 84h6v2h-6zM38 84h2v2h-2zM42 84h10v2h-10zM54 84h2v2h-2zM60 84h2v2h-2zM64 84h2v2h-2zM68 84h4v2h-4zM76 84h2v2h-2zM80 84h4v2h-4zM86 84h2v2h-2zM96 84h2v2h-2zM100 84h4v2h-4zM106 84h4v2h-4zM0 86h2v2h-2zM8 86h2v2h-2zM20 86h2v2h-2zM26 86h2v2h-2zM40 86h4v2h-4zM50 86h2v2h-2zM62 86h2v2h-2zM66 86h2v2h-2zM70 86h4v2h-4zM78 86h2v2h-2zM84 86h2v2h-2zM100 86h2v2h-2zM106 86h4v2h-4zM112 86h2v2h-2zM2 88h2v2h-2zM8 88h2v2h-2zM12 88h2v2h-2zM16 88h2v2h-2zM24 88h2v2h-2zM28 88h8v2h-8zM38 88h2v2h-2zM42 88h2v2h-2zM48 88h2v2h-2zM54 88h2v2h-2zM60 88h2v2h-2zM64 88h2v2h-2zM70 88h2v2h-2zM74 88h2v2h-2zM78 88h8v2h-8zM88 88h6v2h-6zM98 88h2v2h-2zM106 88h2v2h-2zM112 88h2v2h-2zM4 90h2v2h-2zM8 90h2v2h-2zM14 90h2v2h-2zM20 90h2v2h-2zM24 90h2v2h-2zM28 90h2v2h-2zM36 90h4v2h-4zM42 90h4v2h-4zM54 90h2v2h-2zM66 90h4v2h-4zM72 90h6v2h-6zM84 90h2v2h-2zM88 90h8v2h-8zM98 90h8v2h-8zM108 90h4v2h-4zM0 92h2v2h-2zM4 92h2v2h-2zM10 92h8v2h-8zM20 92h4v2h-4zM26 92h2v2h-2zM30 92h6v2h-6zM42 92h4v2h-4zM48 92h4v2h-4zM54 92h6v2h-6zM62 92h4v2h-4zM68 92h4v2h-4zM74 92h6v2h-6zM86 92h10v2h-10zM98 92h2v2h-2zM108 92h2v2h-2zM112 92h2v2h-2zM0 94h10v2h-10zM14 94h2v2h-2zM28 94h4v2h-4zM40 94h4v2h-4zM46 94h2v2h-2zM50 94h2v2h-2zM58 94h2v2h-2zM62 94h2v2h-2zM70 94h8v2h-8zM82 94h2v2h-2zM88 94h2v2h-2zM92 94h4v2h-4zM102 94h2v2h-2zM108 94h2v2h-2zM112 94h2v2h-2zM12 96h8v2h-8zM24 96h2v2h-2zM28 96h4v2h-4zM36 96h2v2h-2zM44 96h4v2h-4zM50 96h12v2h-12zM66 96h2v2h-2zM74 96h4v2h-4zM82 96h2v2h-2zM86 96h20v2h-20zM110 96h4v2h-4zM16 98h6v2h-6zM24 98h2v2h-2zM30 98h2v2h-2zM46 98h8v2h-8zM60 98h2v2h-2zM66 98h4v2h-4zM72 98h2v2h-2zM76 98h6v2h-6zM90 98h2v2h-2zM94 98h4v2h-4zM104 98h2v2h-2zM108 98h2v2h-2zM112 98h2v2h-2zM0 100h14v2h-14zM16 100h18v2h-18zM36 100h4v2h-4zM42 100h2v2h-2zM46 100h2v2h-2zM52 100h2v2h-2zM56 100h2v2h-2zM60 100h4v2h-4zM70 100h8v2h-8zM80 100h8v2h-8zM90 100h4v2h-4zM96 100h2v2h-2zM100 100h2v2h-2zM104 100h2v2h-2zM110 100h2v2h-2zM0 102h2v2h-2zM12 102h2v2h-2zM16 102h6v2h-6zM24 102h6v2h-6zM36 102h2v2h-2zM46 102h2v2h-2zM50 102h4v2h-4zM60 102h2v2h-2zM66 102h2v2h-2zM84 102h2v2h-2zM92 102h2v2h-2zM96 102h2v2h-2zM104 102h4v2h-4zM112 102h2v2h-2zM0 104h2v2h-2zM4 104h6v2h-6zM12 104h2v2h-2zM20 104h8v2h-8zM44 104h20v2h-20zM66 104h2v2h-2zM70 104h4v2h-4zM84 104h4v2h-4zM90 104h4v2h-4zM96 104h14v2h-14zM0 106h2v2h-2zM4 106h6v2h-6zM12 106h2v2h-2zM20 106h2v2h-2zM26 106h4v2h-4zM36 106h6v2h-6zM48 106h4v2h-4zM56 106h4v2h-4zM62 106h4v2h-4zM68 106h4v2h-4zM76 106h2v2h-2zM80 106h4v2h-4zM86 106h2v2h-2zM92 106h2v2h-2zM98 106h8v2h-8zM0 108h2v2h-2zM4 108h6v2h-6zM12 108h2v2h-2zM18 108h4v2h-4zM24 108h6v2h-6zM32 108h2v2h-2zM38 108h2v2h-2zM42 108h4v2h-4zM48 108h2v2h-2zM56 108h20v2h-20zM84 108h6v2h-6zM92 108h2v2h-2zM96 108h4v2h-4zM104 108h4v2h-4zM110 108h4v2h-4zM0 110h2v2h-2zM12 110h2v2h-2zM16 110h12v2h-12zM36 110h6v2h-6zM48 110h2v2h-2zM52 110h6v2h-6zM64 110h12v2h-12zM78 110h4v2h-4zM84 110h2v2h-2zM88 110h2v2h-2zM100 110h2v2h-2zM0 112h14v2h-14zM16 112h4v2h-4zM22 112h4v2h-4zM34 112h2v2h-2zM38 112h2v2h-2zM42 112h4v2h-4zM52 112h4v2h-4zM58 112h4v2h-4zM64 112h4v2h-4zM70 112h2v2h-2zM78 112h4v2h-4zM84 112h2v2h-2zM88 112h6v2h-6zM96 112h2v2h-2zM102 112h2v2h-2zM108 112h4v2h-4z"/></svg>
<div class="t" style="left:605.40px;top:12.00px;font-size:14px;line-height:20px;color:#fff;letter-spacing:-0.041px;">WorkDo Dash SaaS :</div>
<div class="t" style="left:740.60px;top:12.00px;font-size:14px;line-height:20px;color:#f2aa2e;letter-spacing:0.240px;-webkit-text-stroke:0.4px #f2aa2e;">Design Your Own SaaS</div>
<div class="t" style="left:896.00px;top:12.00px;font-size:14px;line-height:20px;color:#fff;letter-spacing:0.488px;">With Premium</div>
<div class="t" style="left:993.20px;top:12.00px;font-size:14px;line-height:20px;color:#2ecf54;letter-spacing:0.225px;-webkit-text-stroke:0.4px #2ecf54;">Add-Ons</div>
<div class="t" style="left:1054.40px;top:12.00px;font-size:14px;line-height:20px;color:#fff;letter-spacing:0.039px;">As Well As Full White Label!!!</div>
<div class="t" style="left:1242.40px;top:12.00px;font-size:14px;line-height:20px;color:#2ecf54;letter-spacing:0.303px;">WorkDo.Io!</div>
<div class="t" style="left:75.75px;top:160.00px;font-size:14px;line-height:20px;color:#333;letter-spacing:0.725px;-webkit-text-stroke:0.5px #333;">Dashboard</div>
<div class="t" style="left:75.75px;top:216.00px;font-size:14px;line-height:20px;color:#333;letter-spacing:0.623px;-webkit-text-stroke:0.5px #333;">User Management</div>
<div class="t" style="left:72.65px;top:267.00px;font-size:14px;line-height:20px;color:#333;letter-spacing:0.475px;-webkit-text-stroke:0.5px #333;">Add-on Manager</div>
<div class="t" style="left:75.75px;top:335.00px;font-size:14px;line-height:20px;color:#333;letter-spacing:0.693px;-webkit-text-stroke:0.5px #333;">Items</div>
<div class="t" style="left:75.75px;top:391.00px;font-size:14px;line-height:20px;color:#333;letter-spacing:0.508px;-webkit-text-stroke:0.5px #333;">Proposal</div>
<div class="t" style="left:75.75px;top:447.00px;font-size:14px;line-height:20px;color:#333;letter-spacing:0.535px;-webkit-text-stroke:0.5px #333;">Retainer</div>
<div class="t" style="left:75.75px;top:503.00px;font-size:14px;line-height:20px;color:#333;letter-spacing:0.455px;-webkit-text-stroke:0.5px #333;">Invoice</div>
<div class="t" style="left:75.75px;top:559.00px;font-size:14px;line-height:20px;color:#333;letter-spacing:0.269px;-webkit-text-stroke:0.5px #333;">Purchases</div>
<div class="t" style="left:75.75px;top:615.00px;font-size:14px;line-height:20px;color:#333;letter-spacing:0.447px;-webkit-text-stroke:0.5px #333;">Projects</div>
<div class="t" style="left:76.75px;top:671.00px;font-size:14px;line-height:20px;color:#333;letter-spacing:0.613px;-webkit-text-stroke:0.5px #333;">Accounting</div>
<div class="t" style="left:75.75px;top:727.00px;font-size:14px;line-height:20px;color:#333;letter-spacing:0.626px;-webkit-text-stroke:0.5px #333;">DoubleEntry</div>
<div class="t" style="left:75.75px;top:783.00px;font-size:14px;line-height:20px;color:#333;letter-spacing:0.040px;-webkit-text-stroke:0.5px #333;">HRM</div>
<div class="t" style="left:75.85px;top:839.00px;font-size:14px;line-height:20px;color:#333;-webkit-text-stroke:0.5px #333;transform:scaleX(0.8963);transform-origin:0 0;">POS</div>
<div class="t" style="left:76.75px;top:895.00px;font-size:14px;line-height:20px;color:#333;-webkit-text-stroke:0.5px #333;transform:scaleX(0.9193);transform-origin:0 0;">CRM</div>
<div class="t" style="left:76.75px;top:951.00px;font-size:14px;line-height:20px;color:#333;-webkit-text-stroke:0.5px #333;transform:scaleX(0.9337);transform-origin:0 0;">Sales</div>
<div class="t" style="left:76.75px;top:1007.00px;font-size:14px;line-height:20px;color:#333;letter-spacing:0.185px;-webkit-text-stroke:0.5px #333;">vCard</div>
<div class="t" style="left:75.79px;top:1063.00px;font-size:14px;line-height:20px;color:#333;-webkit-text-stroke:0.5px #333;transform:scaleX(0.9582);transform-origin:0 0;">LMS</div>
<div class="t" style="left:96.90px;top:288.00px;font-size:14px;line-height:20px;color:#f7b8b0;letter-spacing:0.976px;-webkit-text-stroke:0.2px #f7b8b0;background:linear-gradient(90deg,#f9b4b4 0%,#fbd0b4 45%,#fde3a8 75%,#b9b0dc 82%,#b9b0dc 100%);-webkit-background-clip:text;background-clip:text;color:transparent;-webkit-text-stroke:0;">Premium</div>
<div class="t" style="left:346.00px;top:85.00px;font-size:15px;line-height:21px;color:#4d5463;letter-spacing:-0.111px;">WorkDo</div>
<div class="t" style="left:1454.60px;top:78.00px;font-size:9px;line-height:14px;color:#fff;">0</div>
<div class="t" style="left:1514.70px;top:85.00px;font-size:15px;line-height:21px;color:#4d5463;transform:scaleX(0.9709);transform-origin:0 0;">Create Workspace</div>
<div class="t" style="left:1692.40px;top:85.00px;font-size:15px;line-height:21px;color:#4d5463;letter-spacing:-0.051px;">WorkDo</div>
<div class="t" style="left:1834.77px;top:85.00px;font-size:15px;line-height:21px;color:#1fa968;transform:scaleX(0.9261);transform-origin:0 0;">EN</div>
<div class="t" style="left:285.85px;top:129.00px;font-size:18.6px;line-height:25px;color:#060606;letter-spacing:0.771px;-webkit-text-stroke:0.5px #060606;">Sales Invoice</div>
<div class="t" style="left:284.40px;top:160.00px;font-size:14px;line-height:20px;color:#27b26d;letter-spacing:-0.013px;">Dashboard</div>
<div class="t" style="left:382.40px;top:160.00px;font-size:14px;line-height:20px;color:#3a4252;transform:scaleX(0.9176);transform-origin:0 0;">Sales Invoice</div>
<div class="t" style="left:489.40px;top:160.00px;font-size:14px;line-height:20px;color:#9a9a9a;transform:scaleX(0.9078);transform-origin:0 0;">Show</div>
<div class="t" style="left:322.40px;top:247.00px;font-size:14px;line-height:20px;color:#0a0a0a;font-weight:700;letter-spacing:0.398px;">Invoice ID</div>
<div class="t" style="left:397.00px;top:249.00px;font-size:12.5px;line-height:18px;color:#333a45;transform:scaleX(0.9753);transform-origin:0 0;">#INO00001</div>
<div class="t" style="left:322.40px;top:284.00px;font-size:14px;line-height:20px;color:#0a0a0a;font-weight:700;letter-spacing:0.537px;">Invoice Date</div>
<div class="t" style="left:415.60px;top:286.00px;font-size:12.5px;line-height:18px;color:#333a45;transform:scaleX(0.9689);transform-origin:0 0;">07-12-2023</div>
<div class="t" style="left:322.40px;top:320.00px;font-size:14px;line-height:20px;color:#0a0a0a;font-weight:700;letter-spacing:0.357px;">Invoice</div>
<div class="t" style="left:393.40px;top:323.00px;font-size:11px;line-height:16px;color:#fff;letter-spacing:-0.053px;">Partialy Paid</div>
<div class="t" style="left:329.62px;top:391.00px;font-size:16.5px;line-height:22px;color:#0a0a0a;letter-spacing:0.548px;-webkit-text-stroke:0.45px #0a0a0a;">Item List</div>
<div class="t" style="left:322.52px;top:458.00px;font-size:12.5px;line-height:18px;color:#000;font-weight:700;-webkit-text-stroke:0.25px #000;transform:scaleX(0.9492);transform-origin:0 0;">ITEM</div>
<div class="t" style="left:464.73px;top:458.00px;font-size:12.5px;line-height:18px;color:#000;font-weight:700;-webkit-text-stroke:0.25px #000;transform:scaleX(0.9474);transform-origin:0 0;">QUANTITY</div>
<div class="t" style="left:580.12px;top:458.00px;font-size:12.5px;line-height:18px;color:#000;font-weight:700;-webkit-text-stroke:0.25px #000;transform:scaleX(0.8755);transform-origin:0 0;">PRICE</div>
<div class="t" style="left:697.52px;top:458.00px;font-size:12.5px;line-height:18px;color:#000;font-weight:700;-webkit-text-stroke:0.25px #000;transform:scaleX(0.9346);transform-origin:0 0;">DISCOUNT</div>
<div class="t" style="left:813.12px;top:458.00px;font-size:12.5px;line-height:18px;color:#000;font-weight:700;-webkit-text-stroke:0.25px #000;transform:scaleX(0.9198);transform-origin:0 0;">TAX</div>
<div class="t" style="left:1006.83px;top:458.00px;font-size:12.5px;line-height:18px;color:#000;font-weight:700;-webkit-text-stroke:0.25px #000;transform:scaleX(0.9222);transform-origin:0 0;">DESCRIPTION</div>
<div class="t" style="left:1337.12px;top:458.00px;font-size:12.5px;line-height:18px;color:#000;font-weight:700;-webkit-text-stroke:0.25px #000;transform:scaleX(0.8649);transform-origin:0 0;">PRICE</div>
<div class="t" style="left:1464.72px;top:458.00px;font-size:12.5px;line-height:18px;color:#000;font-weight:700;-webkit-text-stroke:0.25px #000;">#</div>
<div class="t" style="left:321.40px;top:514.00px;font-size:14px;line-height:20px;color:#3a4252;letter-spacing:0.395px;">Refrigerator</div>
<div class="t" style="left:464.00px;top:514.00px;font-size:14px;line-height:20px;color:#3a4252;">1</div>
<div class="t" style="left:580.00px;top:514.00px;font-size:14px;line-height:20px;color:#3a4252;letter-spacing:0.013px;">$90,000.0</div>
<div class="t" style="left:697.40px;top:514.00px;font-size:14px;line-height:20px;color:#3a4252;transform:scaleX(0.9832);transform-origin:0 0;">$0.0</div>
<div class="t" style="left:813.40px;top:506.00px;font-size:12.5px;line-height:18px;color:#7f848c;transform:scaleX(0.8826);transform-origin:0 0;">CGST (10%)</div>
<div class="t" style="left:886.00px;top:506.00px;font-size:12.5px;line-height:18px;color:#7f848c;transform:scaleX(0.9650);transform-origin:0 0;">$9,000.0</div>
<div class="t" style="left:813.40px;top:524.00px;font-size:12.5px;line-height:18px;color:#7f848c;transform:scaleX(0.8629);transform-origin:0 0;">SGST (5%)</div>
<div class="t" style="left:878.00px;top:524.00px;font-size:12.5px;line-height:18px;color:#7f848c;transform:scaleX(0.9650);transform-origin:0 0;">$4,500.0</div>
<div class="t" style="left:1337.00px;top:514.00px;font-size:14px;line-height:20px;color:#3a4252;letter-spacing:0.013px;">$103,500.0</div>
<div class="t" style="left:321.40px;top:580.00px;font-size:14px;line-height:20px;color:#3a4252;letter-spacing:0.088px;">Bed Sheet</div>
<div class="t" style="left:464.00px;top:580.00px;font-size:14px;line-height:20px;color:#3a4252;">1</div>
<div class="t" style="left:580.00px;top:580.00px;font-size:14px;line-height:20px;color:#3a4252;letter-spacing:-0.087px;">$200.0</div>
<div class="t" style="left:697.40px;top:580.00px;font-size:14px;line-height:20px;color:#3a4252;transform:scaleX(0.9832);transform-origin:0 0;">$0.0</div>
<div class="t" style="left:813.40px;top:580.00px;font-size:12.5px;line-height:18px;color:#7f848c;transform:scaleX(0.8629);transform-origin:0 0;">SGST (5%)</div>
<div class="t" style="left:878.00px;top:580.00px;font-size:12.5px;line-height:18px;color:#7f848c;transform:scaleX(0.9576);transform-origin:0 0;">$10.0</div>
<div class="t" style="left:1337.00px;top:580.00px;font-size:14px;line-height:20px;color:#3a4252;letter-spacing:-0.007px;">$210.0</div>
<div class="t" style="left:1337.40px;top:641.00px;font-size:14px;line-height:20px;color:#1e2430;font-weight:700;letter-spacing:0.138px;">Sub Total :</div>
<div class="t" style="left:1428.60px;top:641.00px;font-size:14px;line-height:20px;color:#3a4252;letter-spacing:-0.012px;">$90,200.0</div>
<div class="t" style="left:1340.40px;top:670.00px;font-size:14px;line-height:20px;color:#1e2430;font-weight:700;letter-spacing:0.136px;">Discount :</div>
<div class="t" style="left:1464.00px;top:670.00px;font-size:14px;line-height:20px;color:#3a4252;transform:scaleX(0.9832);transform-origin:0 0;">$0.0</div>
<div class="t" style="left:1367.60px;top:699.00px;font-size:14px;line-height:20px;color:#1e2430;font-weight:700;transform:scaleX(0.8936);transform-origin:0 0;">CGST :</div>
<div class="t" style="left:1436.40px;top:699.00px;font-size:14px;line-height:20px;color:#3a4252;letter-spacing:-0.016px;">$9,000.0</div>
<div class="t" style="left:1368.40px;top:728.00px;font-size:14px;line-height:20px;color:#1e2430;font-weight:700;transform:scaleX(0.8912);transform-origin:0 0;">SGST :</div>
<div class="t" style="left:1436.40px;top:728.00px;font-size:14px;line-height:20px;color:#3a4252;letter-spacing:-0.016px;">$4,510.0</div>
<div class="t" style="left:1352.65px;top:788.00px;font-size:16px;line-height:21px;color:#1fae66;letter-spacing:0.876px;-webkit-text-stroke:0.5px #1fae66;">Total :</div>
<div class="t" style="left:1409.60px;top:788.00px;font-size:16px;line-height:21px;color:#1fae66;font-weight:700;letter-spacing:0.136px;">$103,710.0</div>
<div class="t" style="left:321.62px;top:852.00px;font-size:16.5px;line-height:22px;color:#0a0a0a;letter-spacing:0.800px;-webkit-text-stroke:0.45px #0a0a0a;">From</div>
<div class="t" style="left:749.43px;top:852.00px;font-size:16.5px;line-height:22px;color:#0a0a0a;letter-spacing:0.319px;-webkit-text-stroke:0.45px #0a0a0a;">Billing Address</div>
<div class="t" style="left:1178.42px;top:852.00px;font-size:16.5px;line-height:22px;color:#0a0a0a;letter-spacing:0.184px;-webkit-text-stroke:0.45px #0a0a0a;">Shipping Address</div>
<div class="t" style="left:322.40px;top:915.00px;font-size:12.5px;line-height:18px;color:#15181d;font-weight:700;transform:scaleX(0.9413);transform-origin:0 0;">Company Address</div>
<div class="t" style="left:536.00px;top:901.00px;font-size:12.5px;line-height:18px;color:#363c49;transform:scaleX(0.9747);transform-origin:0 0;">20050 W 12 Mile Rd New York</div>
<div class="t" style="left:535.00px;top:922.00px;font-size:12.5px;line-height:18px;color:#363c49;letter-spacing:-0.047px;">Michigan 10001</div>
<div class="t" style="left:322.40px;top:955.00px;font-size:12.5px;line-height:18px;color:#15181d;font-weight:700;transform:scaleX(0.9466);transform-origin:0 0;">Company City</div>
<div class="t" style="left:535.11px;top:951.00px;font-size:12.5px;line-height:18px;color:#363c49;transform:scaleX(0.8933);transform-origin:0 0;">NEW YORK</div>
<div class="t" style="left:322.40px;top:984.00px;font-size:12.5px;line-height:18px;color:#15181d;font-weight:700;transform:scaleX(0.9306);transform-origin:0 0;">Zip Code</div>
<div class="t" style="left:536.00px;top:980.00px;font-size:12.5px;line-height:18px;color:#363c49;transform:scaleX(0.9481);transform-origin:0 0;">10001</div>
<div class="t" style="left:322.40px;top:1013.00px;font-size:12.5px;line-height:18px;color:#15181d;font-weight:700;transform:scaleX(0.9595);transform-origin:0 0;">Company Country</div>
<div class="t" style="left:536.00px;top:1009.00px;font-size:12.5px;line-height:18px;color:#363c49;letter-spacing:-0.024px;">United States</div>
<div class="t" style="left:322.40px;top:1042.00px;font-size:12.5px;line-height:18px;color:#15181d;font-weight:700;transform:scaleX(0.9500);transform-origin:0 0;">Company Contact</div>
<div class="t" style="left:536.00px;top:1038.00px;font-size:12.5px;line-height:18px;color:#363c49;transform:scaleX(0.9818);transform-origin:0 0;">1254879856</div>
<div class="t" style="left:750.20px;top:905.00px;font-size:12.5px;line-height:18px;color:#15181d;font-weight:700;transform:scaleX(0.9245);transform-origin:0 0;">Billing Address</div>
<div class="t" style="left:963.80px;top:901.00px;font-size:12.5px;line-height:18px;color:#363c49;letter-spacing:-0.099px;">5038 Patterson Road</div>
<div class="t" style="left:750.20px;top:934.00px;font-size:12.5px;line-height:18px;color:#15181d;font-weight:700;transform:scaleX(0.9215);transform-origin:0 0;">Billing City</div>
<div class="t" style="left:962.94px;top:930.00px;font-size:12.5px;line-height:18px;color:#363c49;transform:scaleX(0.8597);transform-origin:0 0;">LAKE FOREST</div>
<div class="t" style="left:750.20px;top:963.00px;font-size:12.5px;line-height:18px;color:#15181d;font-weight:700;transform:scaleX(0.9231);transform-origin:0 0;">Zip Code</div>
<div class="t" style="left:963.80px;top:959.00px;font-size:12.5px;line-height:18px;color:#363c49;transform:scaleX(0.9797);transform-origin:0 0;">60045</div>
<div class="t" style="left:750.20px;top:992.00px;font-size:12.5px;line-height:18px;color:#15181d;font-weight:700;transform:scaleX(0.9462);transform-origin:0 0;">Billing Country</div>
<div class="t" style="left:963.80px;top:988.00px;font-size:12.5px;line-height:18px;color:#363c49;transform:scaleX(0.8572);transform-origin:0 0;">USA</div>
<div class="t" style="left:750.20px;top:1021.00px;font-size:12.5px;line-height:18px;color:#15181d;font-weight:700;transform:scaleX(0.9323);transform-origin:0 0;">Billing Contact</div>
<div class="t" style="left:963.80px;top:1017.00px;font-size:12.5px;line-height:18px;color:#363c49;transform:scaleX(0.9467);transform-origin:0 0;">Julie Rollins</div>
<div class="t" style="left:1178.20px;top:905.00px;font-size:12.5px;line-height:18px;color:#15181d;font-weight:700;transform:scaleX(0.9262);transform-origin:0 0;">Shipping Address</div>
<div class="t" style="left:1391.80px;top:901.00px;font-size:12.5px;line-height:18px;color:#363c49;letter-spacing:-0.099px;">5038 Patterson Road</div>
<div class="t" style="left:1178.20px;top:934.00px;font-size:12.5px;line-height:18px;color:#15181d;font-weight:700;transform:scaleX(0.9244);transform-origin:0 0;">Shipping City</div>
<div class="t" style="left:1390.94px;top:930.00px;font-size:12.5px;line-height:18px;color:#363c49;transform:scaleX(0.8597);transform-origin:0 0;">LAKE FOREST</div>
<div class="t" style="left:1178.20px;top:963.00px;font-size:12.5px;line-height:18px;color:#15181d;font-weight:700;transform:scaleX(0.9231);transform-origin:0 0;">Zip Code</div>
<div class="t" style="left:1391.80px;top:959.00px;font-size:12.5px;line-height:18px;color:#363c49;transform:scaleX(0.9797);transform-origin:0 0;">60045</div>
<div class="t" style="left:1178.20px;top:992.00px;font-size:12.5px;line-height:18px;color:#15181d;font-weight:700;transform:scaleX(0.9448);transform-origin:0 0;">Shipping Country</div>
<div class="t" style="left:1391.80px;top:988.00px;font-size:12.5px;line-height:18px;color:#363c49;transform:scaleX(0.8572);transform-origin:0 0;">USA</div>
<div class="t" style="left:1178.20px;top:1021.00px;font-size:12.5px;line-height:18px;color:#15181d;font-weight:700;transform:scaleX(0.9310);transform-origin:0 0;">Shipping Contact</div>
<div class="t" style="left:1391.80px;top:1017.00px;font-size:12.5px;line-height:18px;color:#363c49;transform:scaleX(0.9467);transform-origin:0 0;">Julie Rollins</div>
<div class="t" style="left:1667.80px;top:226.00px;font-size:12.5px;line-height:18px;color:#0a0a0a;font-weight:700;transform:scaleX(0.9240);transform-origin:0 0;">Assigned User</div>
<div class="t" style="left:1667.80px;top:247.00px;font-size:12.5px;line-height:18px;color:#363c49;letter-spacing:-0.026px;">Chloe Humphrey</div>
<div class="t" style="left:1667.80px;top:276.00px;font-size:12.5px;line-height:18px;color:#0a0a0a;font-weight:700;transform:scaleX(0.9802);transform-origin:0 0;">Created</div>
<div class="t" style="left:1667.80px;top:297.00px;font-size:12.5px;line-height:18px;color:#363c49;transform:scaleX(0.9674);transform-origin:0 0;">07-12-2023</div>
</div></body></html>
